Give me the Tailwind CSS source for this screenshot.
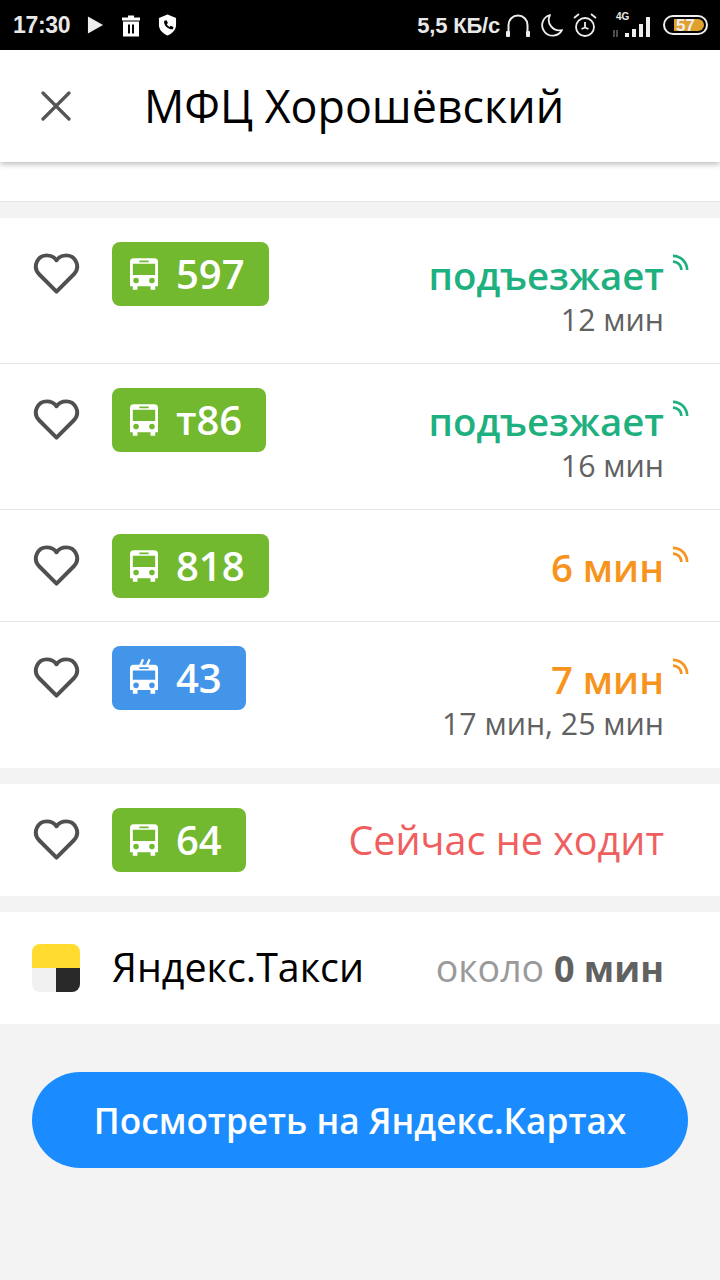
<!DOCTYPE html>
<html lang="ru">
  <head>
    <meta charset="UTF-8" />
    <title>МФЦ Хорошёвский</title>
    <meta name="viewport" content="width=device-width, initial-scale=1.0" />
    <script src="https://cdn.jsdelivr.net/npm/@tailwindcss/browser@4"></script>
  </head>
  <body class="bg-[#f3f3f3] font-['Open_Sans',sans-serif]">
    <div class="w-[720px] h-[1280px] overflow-hidden flex flex-col">
      <!-- status bar -->
      <div class="h-[50px] shrink-0 bg-black text-[#e8e8e8] flex items-center justify-between pl-[13px] pr-[12px] font-['Liberation_Sans',sans-serif] font-bold">
        <div class="flex items-center">
          <span class="text-[23px] w-[72px] tracking-[-0.3px]">17:30</span>
          <svg class="ml-[2px]" width="17" height="20" viewBox="0 0 18 20"><path d="M1 1 17 10 1 19z" fill="#eee"/></svg>
          <svg class="ml-[17px]" width="20" height="23" viewBox="0 0 20 22"><path d="M7 1h6v2h6v3H1V3h6zM2 7h16v15H2zM7 10v9h2v-9zM11 10v9h2v-9z" fill="#fff" fill-rule="evenodd"/></svg>
          <svg class="ml-[17px]" width="19" height="24" viewBox="0 0 20 24"><path d="M10 1 19 4.500V12c0 5-4 9-9 11-5-2-9-6-9-11V4.500z" fill="#fff"/><path d="M6.500 7.500 9 7l1.500 3-1.300 1.200c.6 1.300 1.500 2.200 2.800 2.800l1.300-1.300 3 1.500-.6 2.300c-5 .5-10-4.500-9.200-8.500z" fill="#000"/></svg>
        </div>
        <div class="flex items-center">
          <span class="text-[22px] tracking-[-0.2px]">5,5 КБ/с</span>
          <svg class="ml-[5px]" width="26" height="26" viewBox="0 0 26 26" fill="none"><path d="M3.500 21V13a9.500 9.500 0 0 1 19 0v8" stroke="#eee" stroke-width="2"/><rect x="1" y="19" width="4" height="6" rx="1" fill="#eee"/><rect x="21" y="19" width="4" height="6" rx="1" fill="#eee"/></svg>
          <svg class="ml-[9px]" width="24" height="24" viewBox="0 0 24 24" fill="none"><path d="M10 2a10.500 10.500 0 0 0 12 15A10.500 10.500 0 1 1 10 2z" stroke="#eee" stroke-width="1.800" stroke-linejoin="round"/></svg>
          <svg class="ml-[8px]" width="26" height="26" viewBox="0 0 26 26" fill="none" stroke="#eee" stroke-width="1.800"><circle cx="13" cy="15" r="9"/><path d="M13 10v5.500l-3.500 1.500M13 15.500l3.500 1.500M2 6l5-4M24 6l-5-4"/></svg>
          <div class="ml-[15px] w-[39px] h-[26px] relative">
            <span class="absolute left-[3px] top-0 text-[10px] leading-[10px]">4G</span>
            <svg class="absolute left-0 top-[4px]" width="39" height="22" viewBox="0 0 39 22"><path d="M1 14v7M4 14v7" stroke="#666" stroke-width="1.500"/><rect x="12" y="17" width="4" height="4" fill="#eee"/><rect x="19" y="13" width="4" height="8" fill="#eee"/><rect x="26" y="8" width="4" height="13" fill="#eee"/><rect x="33" y="1" width="4" height="20" fill="#eee"/></svg>
          </div>
          <div class="ml-[11px] w-[45px] h-[20px] rounded-full border-2 border-[#eee] p-[2px] relative">
            <div class="h-full w-[80%] ml-auto mr-0 rounded-r-full bg-[#e0a030]"></div>
            <span class="absolute inset-0 flex items-center justify-center text-[17px] leading-none text-[#eee]">57</span>
          </div>
        </div>
      </div>

      <!-- header -->
      <div class="h-[112px] shrink-0 bg-white flex items-center relative z-10 shadow-[0_2px_6px_rgba(0,0,0,0.28)]">
        <svg class="ml-[41px]" width="30" height="30" viewBox="0 0 30 30"><path d="M2 2 28 28M28 2 2 28" stroke="#555" stroke-width="3.200" stroke-linecap="round"/></svg>
        <h1 class="ml-[73px] text-[44.800px] leading-none text-black">МФЦ Хорошёвский</h1>
      </div>
      <div class="h-[40px] shrink-0 bg-white border-b border-[#e6e6e6]"></div>

      <!-- stop list -->
      <div class="mt-[16px] bg-white">
        <div class="h-[146px] border-b border-[#e6e6e6] flex items-start pl-[33px] pr-[56px] relative">
          <svg class="mt-[34px] shrink-0" width="47" height="44" viewBox="0 0 48 44" fill="none"><path d="M24 40 6 22C-1 14 5 3 14 3c4.500 0 8 2 10 5 2-3 5.500-5 10-5 9 0 15 11 8 19z" stroke="#505050" stroke-width="4" stroke-linejoin="round"/></svg>
          <div class="ml-[32px] mt-[24px] h-[64px] w-[157px] rounded-[8px] bg-[#72b92f] flex items-center pl-[18px] text-white text-[40px] font-semibold">
            <svg width="28" height="34" viewBox="0 0 30 34" fill="#fff"><path fill-rule="evenodd" d="M4 0h22a4 4 0 0 1 4 4v26h-3v4h-5v-4H8v4H3v-4H0V4a4 4 0 0 1 4-4zM3 6v12h24V6zM10 2.500v2h10v-2zM6.500 21a3 3 0 1 0 0 6 3 3 0 0 0 0-6zM23.500 21a3 3 0 1 0 0 6 3 3 0 0 0 0-6z"/></svg>
            <span class="ml-[18px]">597</span>
          </div>
          <div class="ml-auto mt-[32px] text-right">
            <div class="text-[#1fb07f] text-[38.400px] font-semibold leading-[50px]">подъезжает</div>
            <div class="text-[#616161] text-[30.300px] leading-[38px] mt-[1px]">12 мин</div>
          </div>
          <svg class="absolute right-[31px] top-[36px]" width="17" height="17" viewBox="0 0 18 18" fill="none" stroke="#1fb07f" stroke-width="2.800"><path d="M1 2a15 15 0 0 1 15 15M1 8a9 9 0 0 1 9 9"/></svg>
        </div>

        <div class="h-[146px] border-b border-[#e6e6e6] flex items-start pl-[33px] pr-[56px] relative">
          <svg class="mt-[34px] shrink-0" width="47" height="44" viewBox="0 0 48 44" fill="none"><path d="M24 40 6 22C-1 14 5 3 14 3c4.500 0 8 2 10 5 2-3 5.500-5 10-5 9 0 15 11 8 19z" stroke="#505050" stroke-width="4" stroke-linejoin="round"/></svg>
          <div class="ml-[32px] mt-[24px] h-[64px] w-[154px] rounded-[8px] bg-[#72b92f] flex items-center pl-[18px] text-white text-[40px] font-semibold">
            <svg width="28" height="34" viewBox="0 0 30 34" fill="#fff"><path fill-rule="evenodd" d="M4 0h22a4 4 0 0 1 4 4v26h-3v4h-5v-4H8v4H3v-4H0V4a4 4 0 0 1 4-4zM3 6v12h24V6zM10 2.500v2h10v-2zM6.500 21a3 3 0 1 0 0 6 3 3 0 0 0 0-6zM23.500 21a3 3 0 1 0 0 6 3 3 0 0 0 0-6z"/></svg>
            <span class="ml-[18px]">т86</span>
          </div>
          <div class="ml-auto mt-[32px] text-right">
            <div class="text-[#1fb07f] text-[38.400px] font-semibold leading-[50px]">подъезжает</div>
            <div class="text-[#616161] text-[30.300px] leading-[38px] mt-[1px]">16 мин</div>
          </div>
          <svg class="absolute right-[31px] top-[36px]" width="17" height="17" viewBox="0 0 18 18" fill="none" stroke="#1fb07f" stroke-width="2.800"><path d="M1 2a15 15 0 0 1 15 15M1 8a9 9 0 0 1 9 9"/></svg>
        </div>

        <div class="h-[112px] border-b border-[#e6e6e6] flex items-start pl-[33px] pr-[56px] relative">
          <svg class="mt-[34px] shrink-0" width="47" height="44" viewBox="0 0 48 44" fill="none"><path d="M24 40 6 22C-1 14 5 3 14 3c4.500 0 8 2 10 5 2-3 5.500-5 10-5 9 0 15 11 8 19z" stroke="#505050" stroke-width="4" stroke-linejoin="round"/></svg>
          <div class="ml-[32px] mt-[24px] h-[64px] w-[157px] rounded-[8px] bg-[#72b92f] flex items-center pl-[18px] text-white text-[40px] font-semibold">
            <svg width="28" height="34" viewBox="0 0 30 34" fill="#fff"><path fill-rule="evenodd" d="M4 0h22a4 4 0 0 1 4 4v26h-3v4h-5v-4H8v4H3v-4H0V4a4 4 0 0 1 4-4zM3 6v12h24V6zM10 2.500v2h10v-2zM6.500 21a3 3 0 1 0 0 6 3 3 0 0 0 0-6zM23.500 21a3 3 0 1 0 0 6 3 3 0 0 0 0-6z"/></svg>
            <span class="ml-[18px]">818</span>
          </div>
          <div class="ml-auto mt-[32px] text-right">
            <div class="text-[#f7941d] text-[38.400px] font-semibold leading-[50px]">6 мин</div>
          </div>
          <svg class="absolute right-[31px] top-[36px]" width="17" height="17" viewBox="0 0 18 18" fill="none" stroke="#f7941d" stroke-width="2.800"><path d="M1 2a15 15 0 0 1 15 15M1 8a9 9 0 0 1 9 9"/></svg>
        </div>

        <div class="h-[146px] flex items-start pl-[33px] pr-[56px] relative">
          <svg class="mt-[34px] shrink-0" width="47" height="44" viewBox="0 0 48 44" fill="none"><path d="M24 40 6 22C-1 14 5 3 14 3c4.500 0 8 2 10 5 2-3 5.500-5 10-5 9 0 15 11 8 19z" stroke="#505050" stroke-width="4" stroke-linejoin="round"/></svg>
          <div class="ml-[32px] mt-[24px] h-[64px] w-[134px] rounded-[8px] bg-[#4295e9] flex items-center pl-[18px] text-white text-[40px] font-semibold">
            <svg class="-mt-[3px]" width="28" height="37" viewBox="0 0 30 37" fill="#fff"><path d="M11 7 14 0M18 7 21 0" stroke="#fff" stroke-width="2.400"/><path fill-rule="evenodd" d="M4 6h22a4 4 0 0 1 4 4v23h-3v4h-5v-4H8v4H3v-4H0V10a4 4 0 0 1 4-4zM3 12v10h24V12zM10 8.500v2h10v-2zM6.500 25a3 3 0 1 0 0 6 3 3 0 0 0 0-6zM23.500 25a3 3 0 1 0 0 6 3 3 0 0 0 0-6z"/></svg>
            <span class="ml-[18px]">43</span>
          </div>
          <div class="ml-auto mt-[32px] text-right">
            <div class="text-[#f7941d] text-[38.400px] font-semibold leading-[50px]">7 мин</div>
            <div class="text-[#616161] text-[30.300px] leading-[38px] mt-[1px]">17 мин, 25 мин</div>
          </div>
          <svg class="absolute right-[31px] top-[36px]" width="17" height="17" viewBox="0 0 18 18" fill="none" stroke="#f7941d" stroke-width="2.800"><path d="M1 2a15 15 0 0 1 15 15M1 8a9 9 0 0 1 9 9"/></svg>
        </div>
      </div>

      <div class="mt-[16px] h-[112px] bg-white flex items-start pl-[33px] pr-[56px]">
        <svg class="mt-[34px] shrink-0" width="47" height="44" viewBox="0 0 48 44" fill="none"><path d="M24 40 6 22C-1 14 5 3 14 3c4.500 0 8 2 10 5 2-3 5.500-5 10-5 9 0 15 11 8 19z" stroke="#505050" stroke-width="4" stroke-linejoin="round"/></svg>
        <div class="ml-[32px] mt-[24px] h-[64px] w-[134px] rounded-[8px] bg-[#72b92f] flex items-center pl-[18px] text-white text-[40px] font-semibold">
          <svg width="28" height="34" viewBox="0 0 30 34" fill="#fff"><path fill-rule="evenodd" d="M4 0h22a4 4 0 0 1 4 4v26h-3v4h-5v-4H8v4H3v-4H0V4a4 4 0 0 1 4-4zM3 6v12h24V6zM10 2.500v2h10v-2zM6.500 21a3 3 0 1 0 0 6 3 3 0 0 0 0-6zM23.500 21a3 3 0 1 0 0 6 3 3 0 0 0 0-6z"/></svg>
          <span class="ml-[18px]">64</span>
        </div>
        <div class="ml-auto mt-[31px] text-[#ef5f5f] text-[39.500px] leading-[50px]">Сейчас не ходит</div>
      </div>

      <!-- taxi -->
      <div class="mt-[16px] h-[112px] bg-white flex items-center pl-[32px] pr-[56px]">
        <div class="w-[48px] h-[48px] rounded-[8px] overflow-hidden grid grid-cols-2 grid-rows-2 shrink-0">
          <div class="col-span-2 bg-[#ffdc2e]"></div>
          <div class="bg-[#f1f1f1]"></div>
          <div class="bg-[#292929]"></div>
        </div>
        <span class="ml-[32px] text-[39.400px] text-black">Яндекс.Такси</span>
        <span class="ml-auto text-[37.500px] text-[#9a9a9a] font-medium">около <span class="text-[#616161] text-[36px] font-bold">0 мин</span></span>
      </div>

      <div class="mt-[48px] mx-[32px] h-[96px] rounded-full bg-[#1a8cff] flex items-center justify-center text-white text-[35.200px] font-semibold">Посмотреть на Яндекс.Картах</div>
    </div>
  </body>
</html>
